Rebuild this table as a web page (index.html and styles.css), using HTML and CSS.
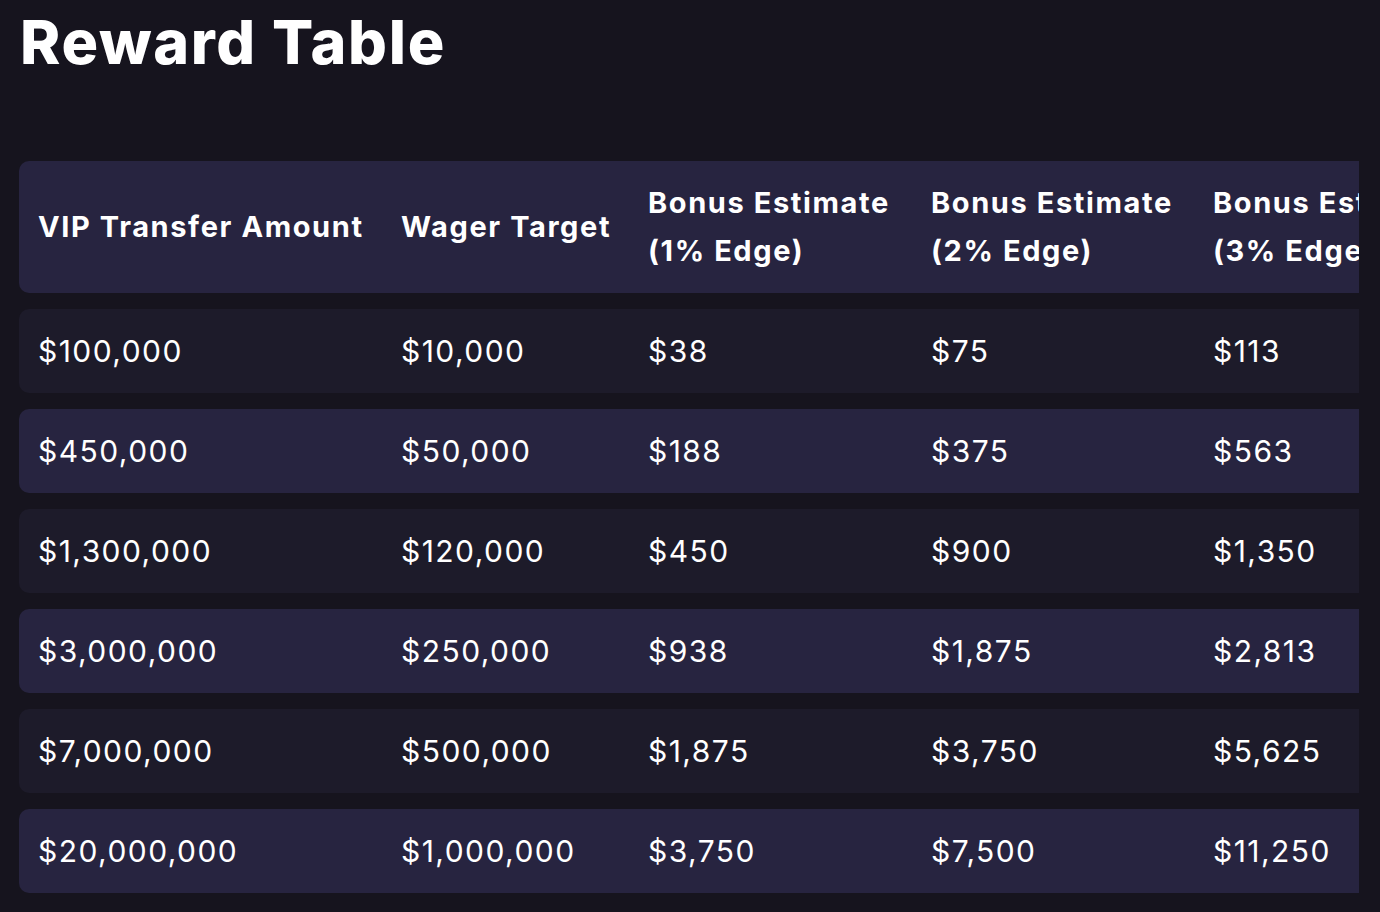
FILE: index.html
```html
<!DOCTYPE html>
<html lang="en">
<head>
<meta charset="utf-8">
<title>Reward Table</title>
<link rel="stylesheet" href="styles.css">
</head>
<body>
<main class="page">
  <h1 class="title">Reward Table</h1>
  <div class="table-wrap">
    <table class="reward-table">
      <thead>
        <tr>
          <th>VIP Transfer Amount</th>
          <th>Wager Target</th>
          <th>Bonus Estimate<br>(1% Edge)</th>
          <th>Bonus Estimate<br>(2% Edge)</th>
          <th>Bonus Estimate<br>(3% Edge)</th>
        </tr>
      </thead>
      <tbody>
        <tr class="dark"><td>$100,000</td><td>$10,000</td><td>$38</td><td>$75</td><td>$113</td></tr>
        <tr class="light"><td>$450,000</td><td>$50,000</td><td>$188</td><td>$375</td><td>$563</td></tr>
        <tr class="dark"><td>$1,300,000</td><td>$120,000</td><td>$450</td><td>$900</td><td>$1,350</td></tr>
        <tr class="light"><td>$3,000,000</td><td>$250,000</td><td>$938</td><td>$1,875</td><td>$2,813</td></tr>
        <tr class="dark"><td>$7,000,000</td><td>$500,000</td><td>$1,875</td><td>$3,750</td><td>$5,625</td></tr>
        <tr class="light"><td>$20,000,000</td><td>$1,000,000</td><td>$3,750</td><td>$7,500</td><td>$11,250</td></tr>
      </tbody>
    </table>
  </div>
</main>
</body>
</html>
```

FILE: styles.css
```css
html, body {
  margin: 0;
  padding: 0;
  background: #16141e;
  color: #ffffff;
  font-family: Inter, "Noto Sans", "Liberation Sans", sans-serif;
}

.page {
  padding: 0 20px;
  height: 912px;
  overflow: hidden;
}

.title {
  margin: 0;
  padding-top: 8px;
  font-size: 61px;
  line-height: 68px;
  font-weight: 800;
  letter-spacing: 1.7px;
}

.table-wrap {
  margin-top: 69px;
  margin-left: -1px;
  width: 1340px;
  overflow: hidden;
}

.reward-table {
  border-collapse: separate;
  border-spacing: 0 16px;
  margin-top: 0;
  white-space: nowrap;
  table-layout: fixed;
  width: 1457px;
}

.reward-table th,
.reward-table td {
  text-align: left;
  padding: 18px 19px;
  line-height: 48px;
  vertical-align: middle;
  overflow: hidden;
}

.reward-table th {
  font-size: 29px;
  font-weight: 700;
  letter-spacing: 1.6px;
  background: #272440;
}

.reward-table td {
  font-size: 30px;
  font-weight: 400;
  letter-spacing: 1.45px;
}

.reward-table th:nth-child(1) { width: 325px; }
.reward-table th:nth-child(2) { width: 209px; }
.reward-table th:nth-child(3) { width: 245px; }
.reward-table th:nth-child(4) { width: 244px; }
.reward-table th:nth-child(5) { width: 244px; }

.reward-table tr > :first-child {
  border-radius: 10px 0 0 10px;
}
.reward-table tr > :last-child {
  border-radius: 0 10px 10px 0;
}

.reward-table tr.dark td { background: #1d1b2a; }
.reward-table tr.light td { background: #272440; }
```
